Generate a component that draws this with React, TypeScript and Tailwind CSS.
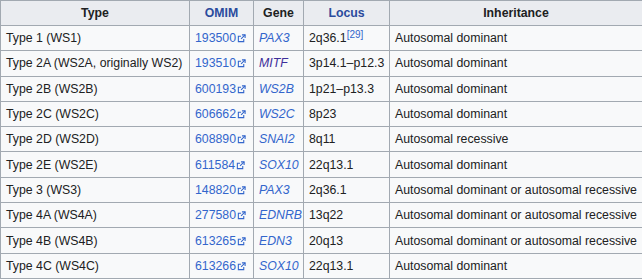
import React from "react"

const rows = [
  { type: "Type 1 (WS1)", omim: "193500", gene: "PAX3", locus: "2q36.1", ref: "[29]", inh: "Autosomal dominant" },
  { type: "Type 2A (WS2A, originally WS2)", omim: "193510", gene: "MITF", visited: true, locus: "3p14.1–p12.3", inh: "Autosomal dominant" },
  { type: "Type 2B (WS2B)", omim: "600193", gene: "WS2B", locus: "1p21–p13.3", inh: "Autosomal dominant" },
  { type: "Type 2C (WS2C)", omim: "606662", gene: "WS2C", locus: "8p23", inh: "Autosomal dominant" },
  { type: "Type 2D (WS2D)", omim: "608890", gene: "SNAI2", locus: "8q11", inh: "Autosomal recessive" },
  { type: "Type 2E (WS2E)", omim: "611584", gene: "SOX10", locus: "22q13.1", inh: "Autosomal dominant" },
  { type: "Type 3 (WS3)", omim: "148820", gene: "PAX3", locus: "2q36.1", inh: "Autosomal dominant or autosomal recessive" },
  { type: "Type 4A (WS4A)", omim: "277580", gene: "EDNRB", locus: "13q22", inh: "Autosomal dominant or autosomal recessive" },
  { type: "Type 4B (WS4B)", omim: "613265", gene: "EDN3", locus: "20q13", inh: "Autosomal dominant or autosomal recessive" },
  { type: "Type 4C (WS4C)", omim: "613266", gene: "SOX10", locus: "22q13.1", inh: "Autosomal dominant" },
]

function ExtIcon() {
  return (
    <svg width="9" height="9" viewBox="0 0 10 10" className="inline-block ml-[1px] align-[-1px]">
      <path d="M4.5 2.5H1.5v6h6v-3" fill="none" stroke="#3366cc" strokeWidth="1.2" />
      <path d="M5.5 1h3.5v3.5" fill="none" stroke="#3366cc" strokeWidth="1.2" />
      <path d="M9 1L4.5 5.5" fill="none" stroke="#3366cc" strokeWidth="1.2" />
    </svg>
  )
}

export default function App() {
  const th = "border border-[#a2a9b1] bg-[#eaecf0] px-[5px] h-[25px] text-center font-bold"
  const td = "border border-[#a2a9b1] px-[5px] h-[25.3px] whitespace-nowrap"
  return (
    <div className="bg-white w-[642px] h-[280px]" style={{ fontFamily: '"Liberation Sans", Arial, sans-serif' }}>
      <table className="table-fixed border-collapse w-[642px] text-[12.3px] text-[#202122] bg-[#f8f9fa] leading-[16px]">
        <colgroup>
          <col className="w-[189px]" />
          <col className="w-[64px]" />
          <col className="w-[50px]" />
          <col className="w-[86px]" />
          <col className="w-[253px]" />
        </colgroup>
        <thead>
          <tr>
            <th className={th}>Type</th>
            <th className={th + " text-[#2a4b9d]"}>OMIM</th>
            <th className={th}>Gene</th>
            <th className={th + " text-[#2a4b9d]"}>Locus</th>
            <th className={th}>Inheritance</th>
          </tr>
        </thead>
        <tbody>
          {rows.map((r) => (
            <tr key={r.omim}>
              <td className={td}>{r.type}</td>
              <td className={td + " text-[#3366cc]"}>
                {r.omim}
                <ExtIcon />
              </td>
              <td className={td + " italic " + (r.visited ? "text-[#3d2e9a]" : "text-[#3366cc]")}>{r.gene}</td>
              <td className={td}>
                {r.locus}
                {r.ref && <sup className="text-[10px] text-[#3366cc] leading-none relative top-[-4px]">{r.ref}</sup>}
              </td>
              <td className={td}>{r.inh}</td>
            </tr>
          ))}
        </tbody>
      </table>
    </div>
  )
}
